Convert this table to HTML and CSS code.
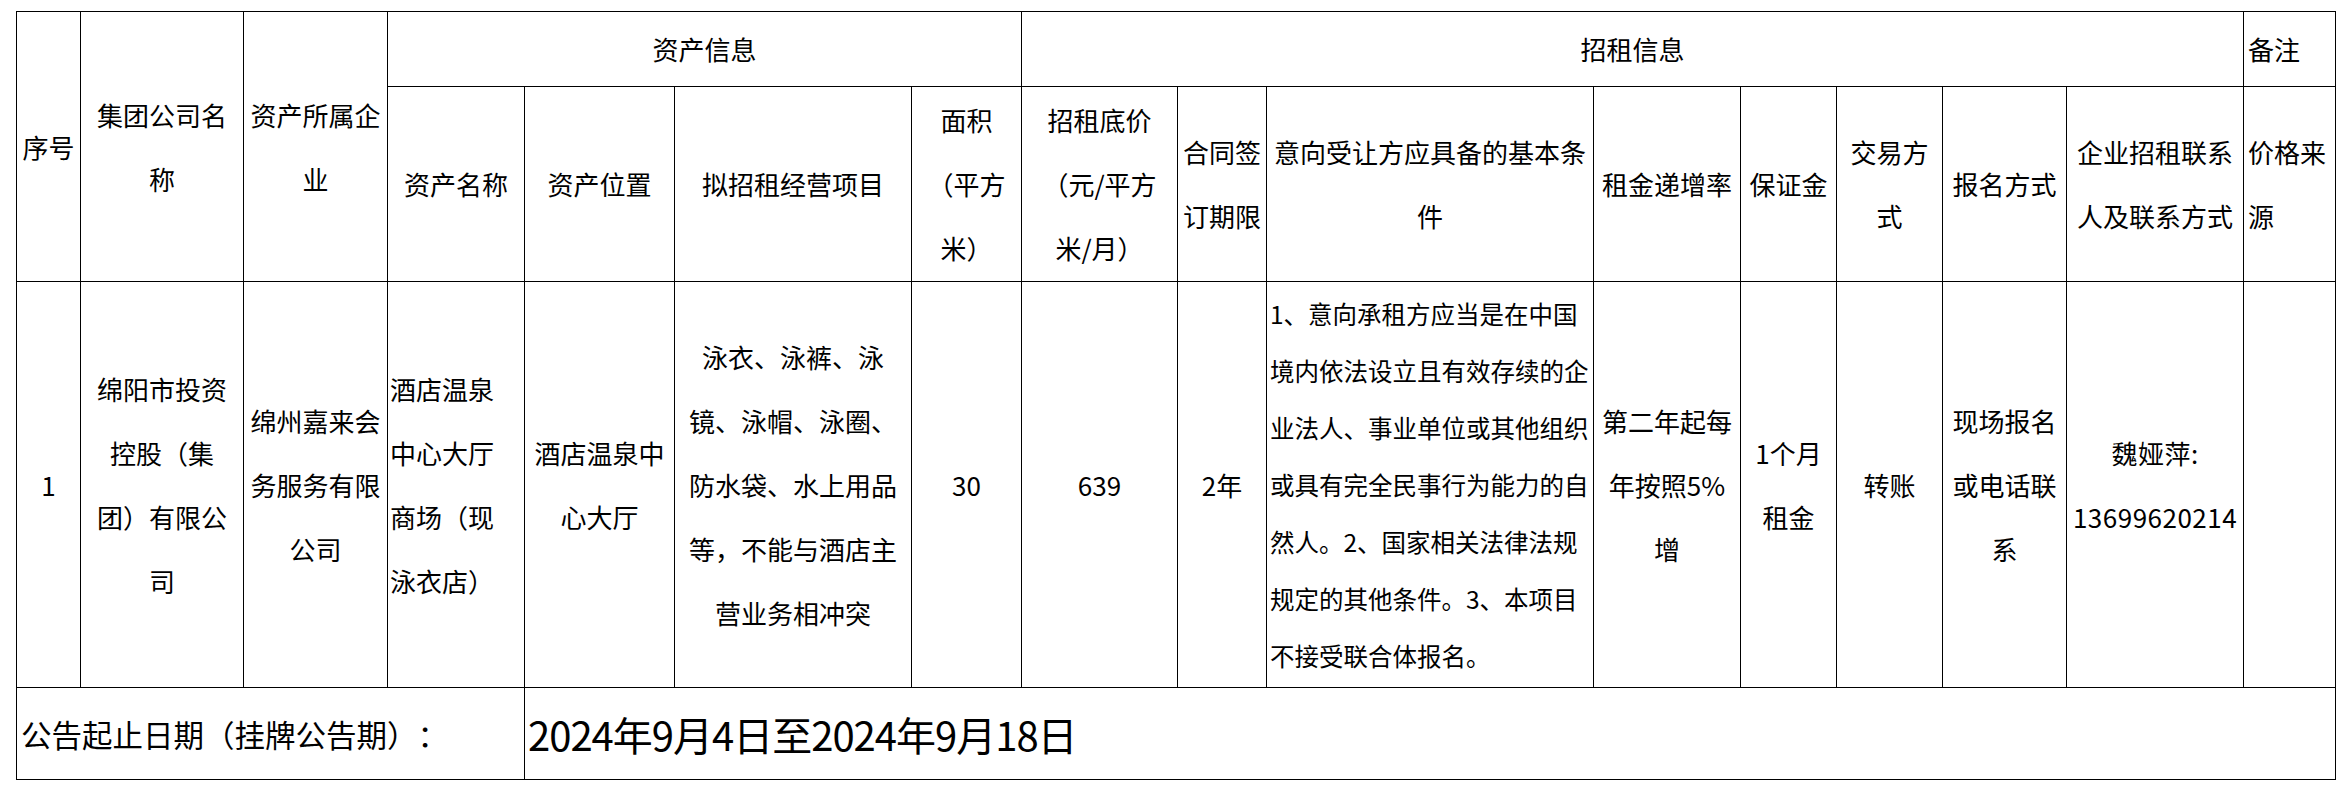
FILE: index.html
```html
<!DOCTYPE html>
<html lang="zh-CN">
<head>
<meta charset="utf-8">
<title>招租公告</title>
<link rel="stylesheet" href="styles.css">
</head>
<body>
<table class="sheet">
  <colgroup>
    <col class="c-no"><col class="c-group"><col class="c-owner"><col class="c-name"><col class="c-loc"><col class="c-biz"><col class="c-area"><col class="c-price"><col class="c-term"><col class="c-cond"><col class="c-rate"><col class="c-dep"><col class="c-pay"><col class="c-sign"><col class="c-contact"><col class="c-note">
  </colgroup>
  <tr class="r-h1">
    <th rowspan="2">序号</th>
    <th rowspan="2">集团公司名<br>称</th>
    <th rowspan="2">资产所属企<br>业</th>
    <th colspan="4">资产信息</th>
    <th colspan="8">招租信息</th>
    <th class="al">备注</th>
  </tr>
  <tr class="r-h2">
    <th>资产名称</th>
    <th>资产位置</th>
    <th>拟招租经营项目</th>
    <th>面积<br>（平方<br>米）</th>
    <th>招租底价<br>（元/平方<br>米/月）</th>
    <th>合同签<br>订期限</th>
    <th>意向受让方应具备的基本条<br>件</th>
    <th>租金递增率</th>
    <th>保证金</th>
    <th>交易方<br>式</th>
    <th>报名方式</th>
    <th>企业招租联系<br>人及联系方式</th>
    <th class="al">价格来<br>源</th>
  </tr>
  <tr class="r-data">
    <td>1</td>
    <td>绵阳市投资<br>控股（集<br>团）有限公<br>司</td>
    <td>绵州嘉来会<br>务服务有限<br>公司</td>
    <td class="al tight">酒店温泉<br>中心大厅<br>商场（现<br>泳衣店）</td>
    <td>酒店温泉中<br>心大厅</td>
    <td>泳衣、泳裤、泳<br>镜、泳帽、泳圈、<br>防水袋、水上用品<br>等，不能与酒店主<br>营业务相冲突</td>
    <td>30</td>
    <td>639</td>
    <td>2年</td>
    <td class="al cond">1、意向承租方应当是在中国<br>境内依法设立且有效存续的企<br>业法人、事业单位或其他组织<br>或具有完全民事行为能力的自<br>然人。2、国家相关法律法规<br>规定的其他条件。3、本项目<br>不接受联合体报名。</td>
    <td>第二年起每<br>年按照5%<br>增</td>
    <td>1个月<br>租金</td>
    <td>转账</td>
    <td>现场报名<br>或电话联<br>系</td>
    <td class="contact">魏娅萍:<br>13699620214</td>
    <td></td>
  </tr>
  <tr class="r-foot">
    <td colspan="4" class="al label">公告起止日期（挂牌公告期）：</td>
    <td colspan="12" class="al date">2024年9月4日至2024年9月18日</td>
  </tr>
</table>
</body>
</html>
```

FILE: styles.css
```css
html, body {
  margin: 0;
  padding: 0;
  background: #ffffff;
}

.sheet {
  border-collapse: collapse;
  table-layout: fixed;
  width: 2320px;
  margin: 11px 0 0 16px;
  font-family: "Noto Sans CJK SC", "Microsoft YaHei", sans-serif;
  font-size: 26px;
  line-height: 64px;
  color: #000000;
  text-spacing-trim: space-all;
}

.sheet th,
.sheet td {
  border: 1px solid #000000;
  padding: 0 4px;
  text-align: center;
  vertical-align: middle;
  font-weight: 400;
  white-space: nowrap;
  overflow: hidden;
}

.sheet .al { text-align: left; }
.sheet .tight { padding-left: 2px; }

.sheet .cond {
  font-size: 24.5px;
  line-height: 57px;
  padding: 0 2px 0 3px;
}

.sheet .contact { letter-spacing: 0.5px; }

.sheet .label {
  font-size: 30.5px;
  padding-left: 4px;
}

.sheet .date {
  font-size: 40px;
  letter-spacing: -1px;
  padding-left: 3px;
}

.r-h1 { height: 75px; }
.r-h2 { height: 195px; }
.r-data { height: 406px; }
.r-foot { height: 92px; }

.c-no { width: 64px; }
.c-group { width: 163px; }
.c-owner { width: 144px; }
.c-name { width: 137px; }
.c-loc { width: 150px; }
.c-biz { width: 237px; }
.c-area { width: 110px; }
.c-price { width: 156px; }
.c-term { width: 89px; }
.c-cond { width: 327px; }
.c-rate { width: 147px; }
.c-dep { width: 96px; }
.c-pay { width: 106px; }
.c-sign { width: 124px; }
.c-contact { width: 177px; }
.c-note { width: 92px; }
```
